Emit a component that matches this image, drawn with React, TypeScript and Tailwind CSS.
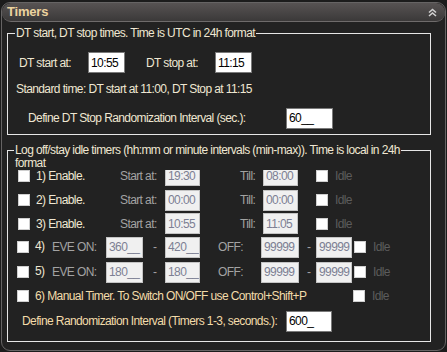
import React from 'react';

const Check: React.FC = () => (
  <div className="w-[12px] h-[12px] bg-white border border-[#cfcfcf]" />
);

const Field: React.FC<{ value: string; w: string; on?: boolean }> = ({ value, w, on }) => (
  <div
    className={`${w} h-[21px] flex items-center pl-[2px] text-[12px] leading-none tracking-[-0.6px] overflow-hidden ${
      on ? 'bg-white border border-[#7a7a7a] text-black' : 'bg-[#f0f0f0] border border-[#c4c4c4] text-[#7c7f93]'
    }`}
  >
    {value}
  </div>
);

const Cell: React.FC<{ w: string; children?: React.ReactNode; className?: string }> = ({ w, children, className }) => (
  <div className={`${w} shrink-0 flex items-center whitespace-nowrap ${className ?? ''}`}>{children}</div>
);

const grey = 'text-[#a3a3a3]';
const idle = 'text-[#5c5c5c]';

const ClockRow: React.FC<{ n: number; start: string; till: string; h: string }> = ({ n, start, till, h }) => (
  <div className={`flex items-center ${h} pl-[10px]`}>
    <Cell w="w-[18px]"><Check /></Cell>
    <Cell w="w-[84px]">{n}) Enable.</Cell>
    <Cell w="w-[45px]" className={grey}>Start at:</Cell>
    <Cell w="w-[75px]"><Field value={start} w="w-[35px]" /></Cell>
    <Cell w="w-[23px]" className={grey}>Till:</Cell>
    <Cell w="w-[53px]"><Field value={till} w="w-[35px]" /></Cell>
    <Cell w="w-[19px]"><Check /></Cell>
    <Cell w="w-[30px]" className={idle}>Idle</Cell>
  </div>
);

const EveRow: React.FC<{ n: number; a: string; b: string; h: string }> = ({ n, a, b, h }) => (
  <div className={`flex items-center ${h} pl-[9px]`}>
    <Cell w="w-[18px]"><Check /></Cell>
    <Cell w="w-[17px]" className="-mt-[3px]">{n})</Cell>
    <Cell w="w-[54px]" className={grey}>EVE ON:</Cell>
    <Cell w="w-[47px]"><Field value={a} w="w-[37px]" /></Cell>
    <Cell w="w-[12px]" className={grey}>-</Cell>
    <Cell w="w-[53px]"><Field value={b} w="w-[35px]" /></Cell>
    <Cell w="w-[43px]" className={grey}>OFF:</Cell>
    <Cell w="w-[46px]"><Field value="99999" w="w-[38px]" /></Cell>
    <Cell w="w-[9px]" className={grey}>-</Cell>
    <Cell w="w-[38px]"><Field value="99999" w="w-[36px]" /></Cell>
    <Cell w="w-[19px]"><Check /></Cell>
    <Cell w="w-[30px]" className={idle}>Idle</Cell>
  </div>
);

const App: React.FC = () => {
  return (
    <div
      className="w-[447px] h-[352px] bg-[#1c1c1c] pt-[2px] pl-[1px] text-[12px] tracking-[-0.6px] text-[#efe7d2]"
      style={{ fontFamily: '"Liberation Sans", Arial, sans-serif' }}
    >
      <div className="w-[445px] h-[349px] rounded-[9px] border border-[#666464] bg-[#222222] overflow-hidden flex flex-col">
        <div className="h-[19px] shrink-0 rounded-[9px] bg-gradient-to-b from-[#575353] to-[#3b3939] border-b border-[#6e6b6b] flex items-center justify-between pl-[5px] pr-[8px]">
          <span className="font-bold text-[13px] tracking-[-0.2px] text-[#ecd39f]">Timers</span>
          <svg width="9" height="9" viewBox="0 0 9 9" fill="none" stroke="#cfcfcf" strokeWidth="1.6">
            <path d="M1 4.5 L4.5 1.5 L8 4.5" />
            <path d="M1 8 L4.5 5 L8 8" />
          </svg>
        </div>

        <div className="pl-[5px] pt-[11px]">
          {/* DT group */}
          <div className="relative w-[424px] h-[102px] border border-[#e6e6e6]">
            <span className="absolute -top-[8px] left-[7px] px-[1px] bg-[#222222] leading-[14px] whitespace-nowrap">
              DT start, DT stop times. Time is UTC in 24h format
            </span>
            <div className="flex items-center h-[21px] mt-[18px] pl-[11px]">
              <Cell w="w-[69px]">DT start at:</Cell>
              <Cell w="w-[58px]"><Field value="10:55" w="w-[37px]" on /></Cell>
              <Cell w="w-[69px]">DT stop at:</Cell>
              <Field value="11:15" w="w-[37px]" on />
            </div>
            <div className="h-[14px] mt-[9px] pl-[8px] leading-[14px]">
              Standard time: DT start at 11:00, DT Stop at 11:15
            </div>
            <div className="flex items-center h-[20px] mt-[12px] pl-[20px]">
              <Cell w="w-[258px]">Define DT Stop Randomization Interval (sec.):</Cell>
              <Field value="60__" w="w-[47px]" on />
            </div>
          </div>

          {/* Log off group */}
          <div className="relative w-[424px] h-[192px] mt-[15px] border border-[#e6e6e6]">
            <span className="absolute -top-[7px] left-[6px] px-[1px] bg-[#222222] leading-[13px] inline-block whitespace-nowrap">
              Log off/stay idle timers (hh:mm or minute intervals (min-max)). Time is local in 24h
              <br />
              format
            </span>
            <div className="h-[12px]" />
            <ClockRow n={1} start="19:30" till="08:00" h="h-[25px]" />
            <ClockRow n={2} start="00:00" till="00:00" h="h-[24px]" />
            <ClockRow n={3} start="10:55" till="11:05" h="h-[23px]" />
            <EveRow n={4} a="360__" b="420__" h="h-[24px]" />
            <EveRow n={5} a="180__" b="180__" h="h-[26px]" />
            <div className="flex items-center h-[22px] pl-[9px] text-[#f3dcaa]">
              <Cell w="w-[18px]"><Check /></Cell>
              <Cell w="w-[318px]">6) Manual Timer. To Switch ON/OFF use Control+Shift+P</Cell>
              <Cell w="w-[19px]"><Check /></Cell>
              <Cell w="w-[30px]" className={idle}>Idle</Cell>
            </div>
            <div className="flex items-center h-[28px] pl-[14px] text-[#f3dcaa]">
              <Cell w="w-[264px]">Define Randomization Interval (Timers 1-3, seconds.):</Cell>
              <Field value="600_" w="w-[46px]" on />
            </div>
          </div>
        </div>
      </div>
    </div>
  );
};

export default App;
